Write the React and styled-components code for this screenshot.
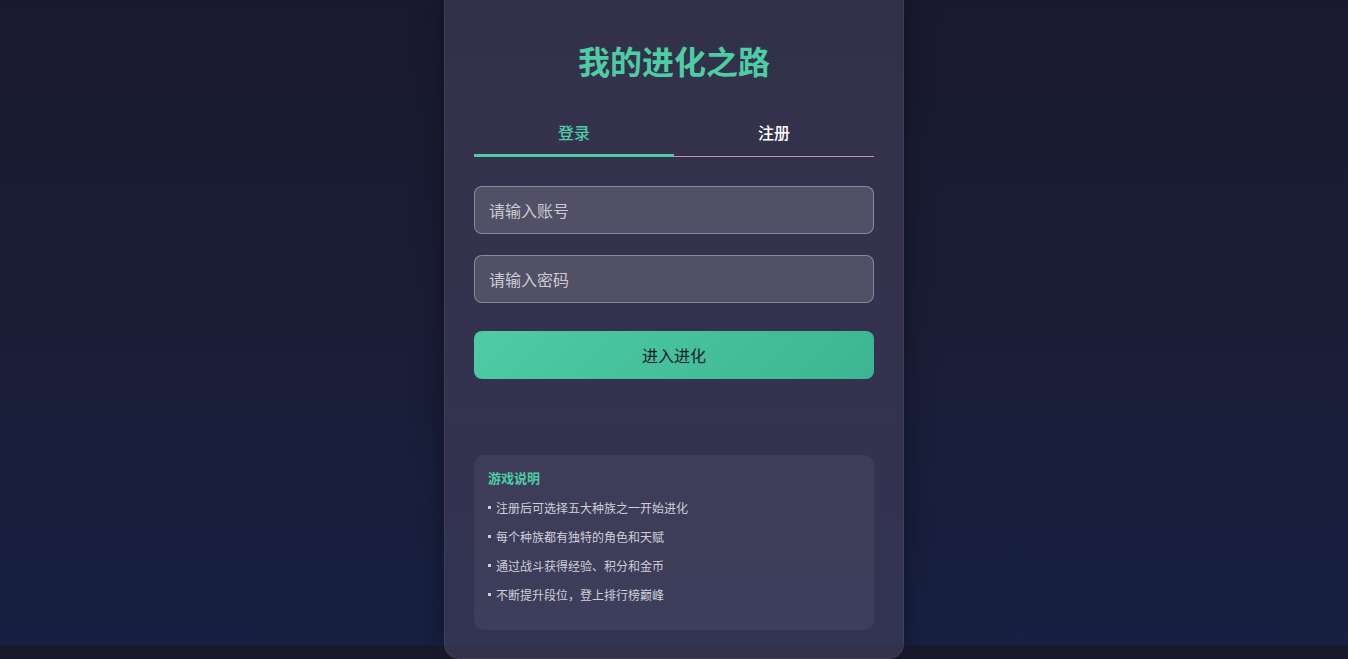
import React, { useState } from "react"
import styled, { createGlobalStyle } from "styled-components"

const GlobalStyle = createGlobalStyle`
  html, body {
    margin: 0;
    padding: 0;
    background: #1a1a2e;
    font-family: "Noto Sans CJK SC", "Noto Sans", sans-serif;
  }
  html {
    overflow: hidden;
  }
  * {
    box-sizing: border-box;
  }
`

const tips = [
  "注册后可选择五大种族之一开始进化",
  "每个种族都有独特的角色和天赋",
  "通过战斗获得经验、积分和金币",
  "不断提升段位，登上排行榜巅峰",
]

const App = () => {
  const [tab, setTab] = useState("login")
  const [account, setAccount] = useState("")
  const [password, setPassword] = useState("")

  const handleSubmit = event => {
    event.preventDefault()
  }

  return (
    <Page>
      <GlobalStyle />
      <Card>
        <Title>我的进化之路</Title>
        <Tabs>
          <Tab active={tab === "login"} onClick={() => setTab("login")}>
            登录
          </Tab>
          <Tab active={tab === "register"} onClick={() => setTab("register")}>
            注册
          </Tab>
        </Tabs>
        <Form onSubmit={handleSubmit}>
          <Input
            type="text"
            value={account}
            placeholder="请输入账号"
            onChange={event => setAccount(event.target.value)}
          />
          <Input
            type="password"
            value={password}
            placeholder="请输入密码"
            onChange={event => setPassword(event.target.value)}
          />
          <Button type="submit">进入进化</Button>
        </Form>
        <Info>
          <InfoTitle>游戏说明</InfoTitle>
          {tips.map(tip => (
            <InfoItem key={tip}>
              <Bullet />
              {tip}
            </InfoItem>
          ))}
        </Info>
      </Card>
    </Page>
  )
}
export default App

const Page = styled.div`
  height: 659px;
  display: flex;
  justify-content: center;
  align-items: flex-end;
  background: linear-gradient(
    180deg,
    #191a2e 0px,
    #1a1d36 322px,
    #172042 645px,
    #1a1a2e 645px
  );
`

const Card = styled.div`
  flex-shrink: 0;
  width: 460px;
  padding: 30px 29px 28px;
  background: rgba(78, 72, 102, 0.5);
  border: 1px solid rgba(255, 255, 255, 0.06);
  border-radius: 15px;
  box-shadow: 0 0 30px rgba(0, 0, 0, 0.35);
`

const Title = styled.h1`
  margin: 25px 0 34px;
  text-align: center;
  font-size: 32px;
  line-height: 38px;
  font-weight: 700;
  color: #4ecca3;
`

const Tabs = styled.div`
  display: flex;
  margin-bottom: 29px;
`

const Tab = styled.div`
  flex: 1;
  text-align: center;
  padding: 9px 0 ${p => (p.active ? "12px" : "14px")};
  font-size: 16px;
  line-height: 20px;
  font-weight: 500;
  cursor: pointer;
  color: ${p => (p.active ? "#4ecca3" : "#ffffff")};
  border-bottom: ${p =>
    p.active ? "3px solid #4ecca3" : "1px solid #c98bb0"};
`

const Form = styled.form`
  display: flex;
  flex-direction: column;
`

const Input = styled.input`
  height: 48px;
  margin-bottom: 21px;
  padding: 0 14px;
  border: 1px solid rgba(255, 255, 255, 0.32);
  border-radius: 8px;
  background: rgba(255, 255, 255, 0.15);
  color: #fff;
  font-family: inherit;
  font-size: 16px;
  outline: none;

  &::placeholder {
    color: #cbcbd2;
  }
  &:nth-of-type(2) {
    margin-bottom: 28px;
  }
`

const Button = styled.button`
  height: 48px;
  border: 0;
  border-radius: 8px;
  background: linear-gradient(135deg, #4ecca3 0%, #3db592 100%);
  color: #1a1a2e;
  font-family: inherit;
  font-size: 16px;
  font-weight: 400;
  cursor: pointer;
`

const Info = styled.div`
  margin-top: 76px;
  height: 175px;
  padding: 14px 14px 15px;
  border-radius: 10px;
  background: rgba(255, 255, 255, 0.05);
`

const InfoTitle = styled.div`
  font-size: 13px;
  line-height: 18px;
  font-weight: 700;
  color: #4ecca3;
  margin-bottom: 6px;
`

const InfoItem = styled.div`
  display: flex;
  align-items: center;
  font-size: 12px;
  line-height: 29px;
  color: #cfcfd8;
`

const Bullet = styled.span`
  width: 3px;
  height: 3px;
  margin-right: 5px;
  background: #cfcfd8;
`
